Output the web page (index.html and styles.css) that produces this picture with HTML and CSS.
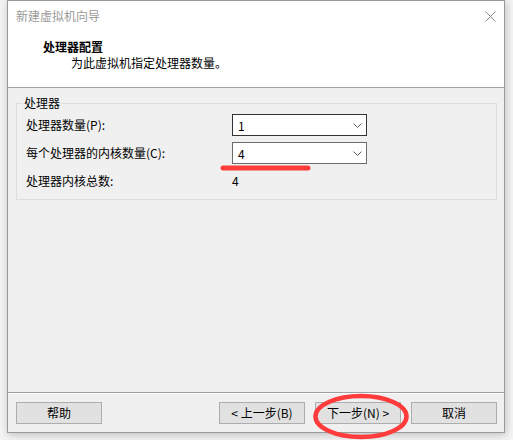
FILE: index.html
```html
<!DOCTYPE html>
<html lang="zh-CN">
<head>
<meta charset="utf-8">
<title>新建虚拟机向导</title>
<link rel="stylesheet" href="styles.css">
</head>
<body>
<div class="screen">
  <div class="window">
    <div class="header">
      <div class="titlebar">
        <span class="title">新建虚拟机向导</span>
        <svg class="close" width="11" height="11" viewBox="0 0 11 11"><path d="M0.5 0.5 L10.5 10.5 M10.5 0.5 L0.5 10.5" stroke="#8a8a8a" stroke-width="1" fill="none"/></svg>
      </div>
      <div class="heading">处理器配置</div>
      <div class="subheading">为此虚拟机指定处理器数量。</div>
    </div>
    <div class="body">
      <fieldset class="group">
        <legend>处理器</legend>
        <div class="grid">
          <span class="label">处理器数量(P):</span>
          <div class="combo focused"><span>1</span><svg width="9" height="5" viewBox="0 0 9 5"><polyline points="0.5,0.5 4.5,4.5 8.5,0.5" fill="none" stroke="#606060" stroke-width="1"/></svg></div>
          <span class="label">每个处理器的内核数量(C):</span>
          <div class="combo"><span>4</span><svg width="9" height="5" viewBox="0 0 9 5"><polyline points="0.5,0.5 4.5,4.5 8.5,0.5" fill="none" stroke="#606060" stroke-width="1"/></svg></div>
          <span class="label">处理器内核总数:</span>
          <span class="value">4</span>
        </div>
      </fieldset>
    </div>
    <div class="footer">
      <button class="btn">帮助</button>
      <button class="btn prev">&lt; 上一步(B)</button>
      <button class="btn">下一步(N) &gt;</button>
      <button class="btn">取消</button>
    </div>
  </div>
  <svg class="mark underline" width="92" height="6" viewBox="0 0 92 6"><rect x="0.5" y="0.5" width="90" height="5" rx="2.5" fill="#ff3b3b"/></svg>
  <svg class="mark ellipse" width="100" height="50" viewBox="0 0 100 50"><ellipse cx="49" cy="24.5" rx="45.5" ry="20.5" fill="none" stroke="#ff3b3b" stroke-width="4.5"/></svg>
</div>
</body>
</html>
```
FILE: styles.css
```css
* { box-sizing: border-box; }
html, body { margin: 0; padding: 0; }
body {
  width: 513px;
  height: 440px;
  overflow: hidden;
  background: #f4f4f4;
  font-family: "Noto Sans CJK SC", "Noto Sans", sans-serif;
  font-size: 12px;
  color: #000;
}
.screen {
  position: relative;
  width: 513px;
  height: 440px;
  padding-left: 7px;
}
.window {
  width: 498px;
  height: 433px;
  border: 1px solid #9a9a9a;
  background: #f0f0f0;
  box-shadow: 1px 2px 8px rgba(0, 0, 0, 0.22);
  display: flex;
  flex-direction: column;
}
.header {
  height: 87px;
  flex: none;
  background: #fff;
  border-bottom: 1px solid #a0a0a0;
  padding-left: 8px;
}
.titlebar {
  height: 30px;
  display: flex;
  align-items: center;
  justify-content: space-between;
  padding-right: 8px;
}
.title { color: #9a9a9a; line-height: 16px; }
.close { display: block; }
.heading {
  margin: 8px 0 0 27px;
  font-weight: bold;
  line-height: 16px;
}
.subheading {
  margin-left: 55px;
  line-height: 16px;
}
.body {
  flex: 1;
  padding: 7px 7px 0 8px;
}
.group {
  margin: 0;
  min-width: 0;
  border: 1px solid #dcdcdc;
  padding: 3px 8px 7px 9px;
}
.group legend {
  margin-left: -3px;
  padding: 0 1px;
  line-height: 16px;
}
.grid {
  display: grid;
  grid-template-columns: 206px 135px;
  grid-auto-rows: 22px;
  row-gap: 6px;
  align-items: center;
}
.label, .value { line-height: 16px; }
.combo {
  height: 22px;
  border: 1px solid #6b6b6b;
  background: #fff;
  display: flex;
  align-items: center;
  justify-content: space-between;
  padding: 0 4px 0 5px;
}
.combo.focused { border-color: #333; }
.combo svg { display: block; }
.footer {
  height: 40px;
  flex: none;
  border-top: 1px solid #a0a0a0;
  box-shadow: inset 0 1px 0 #fff;
  display: flex;
  align-items: flex-start;
  gap: 10px;
  padding: 9px 7px 0 8px;
}
.btn {
  width: 86px;
  height: 22px;
  padding: 0;
  border: 1px solid #adadad;
  background: #e1e1e1;
  font: inherit;
  color: #000;
  line-height: 18px;
}
.btn.prev { margin-left: auto; }
.mark { position: absolute; display: block; }
.underline { left: 220px; top: 165px; }
.ellipse { left: 312px; top: 392px; }
```
